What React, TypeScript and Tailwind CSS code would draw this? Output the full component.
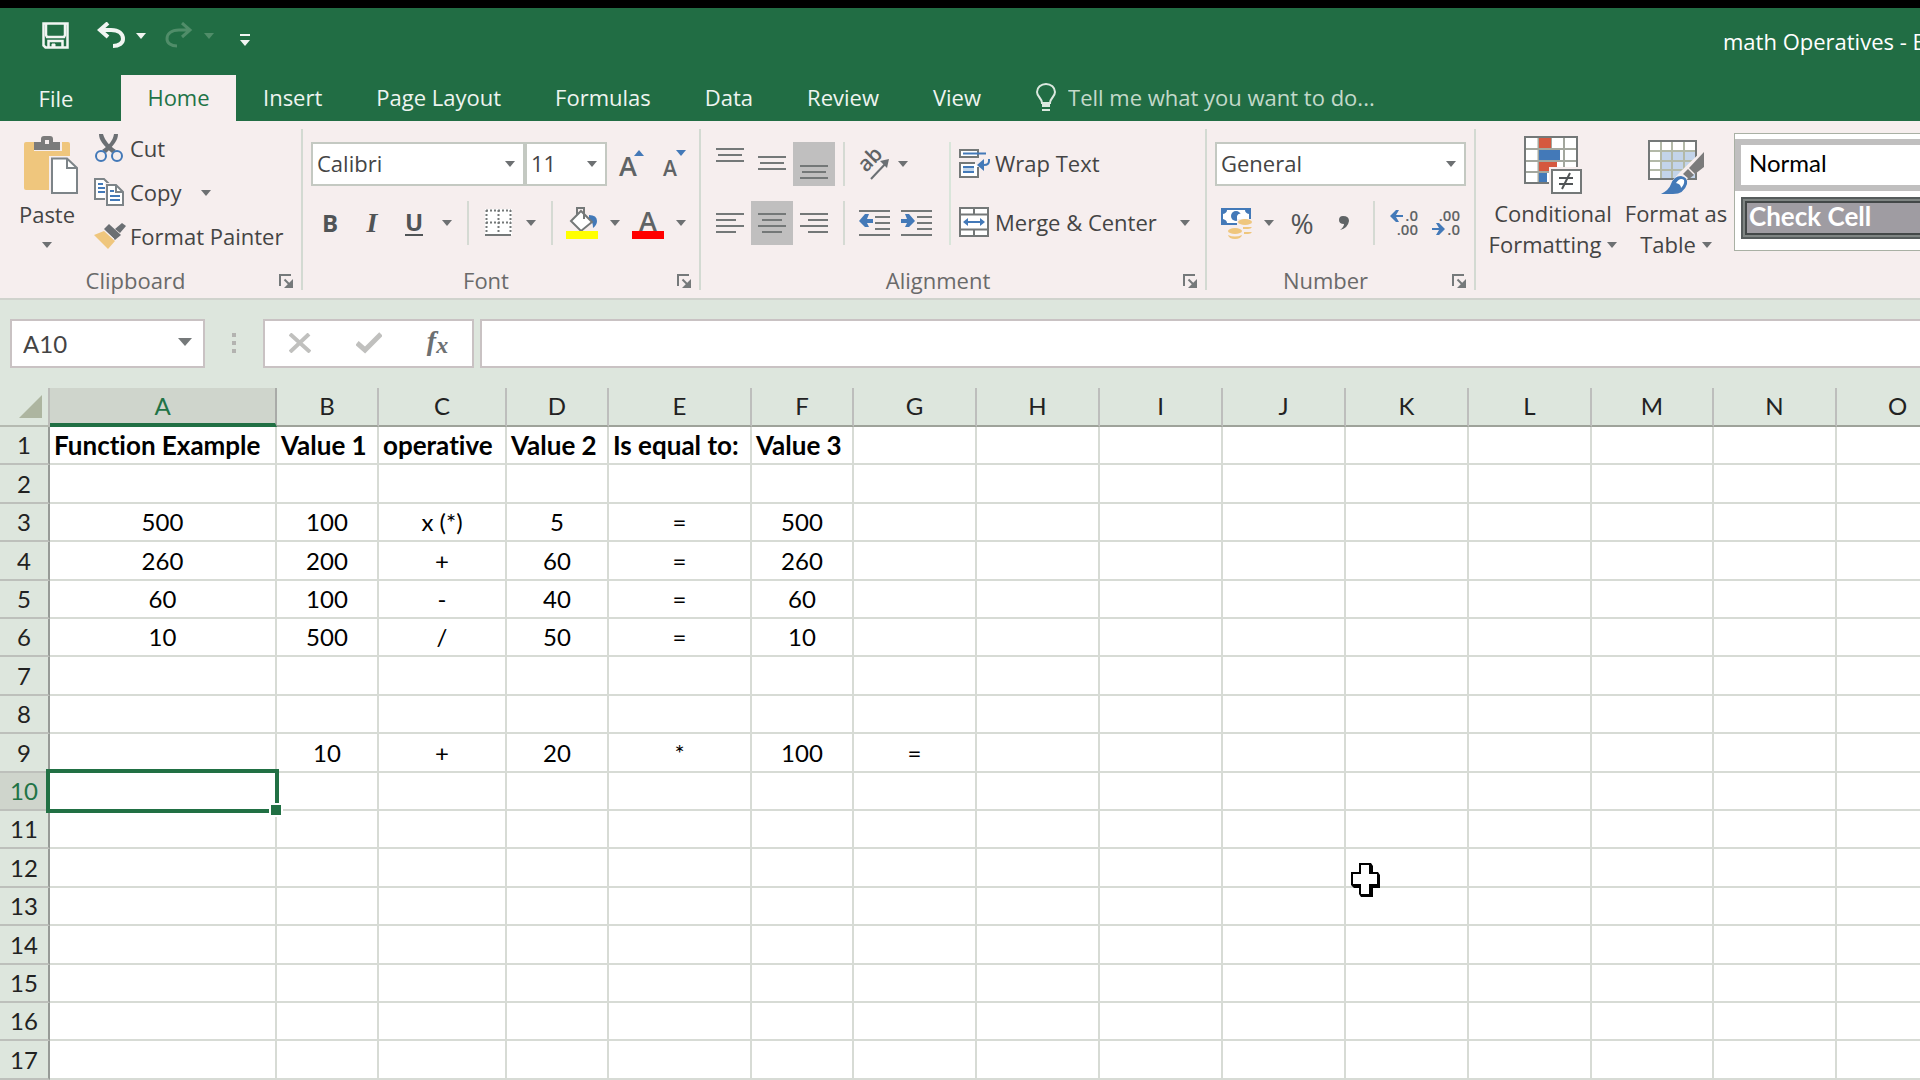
import type { ReactNode } from 'react';
import clsx from 'clsx';

const columns = [
  { id: 'A', width: 'w-[227px]' },
  { id: 'B', width: 'w-[102px]' },
  { id: 'C', width: 'w-[128px]' },
  { id: 'D', width: 'w-[102px]' },
  { id: 'E', width: 'w-[143px]' },
  { id: 'F', width: 'w-[102px]' },
  { id: 'G', width: 'w-[123px]' },
  { id: 'H', width: 'w-[123px]' },
  { id: 'I', width: 'w-[123px]' },
  { id: 'J', width: 'w-[123px]' },
  { id: 'K', width: 'w-[123px]' },
  { id: 'L', width: 'w-[123px]' },
  { id: 'M', width: 'w-[122px]' },
  { id: 'N', width: 'w-[123px]' },
  { id: 'O', width: 'w-[123px]' },
];

// Cell values by row number, starting at column A
const cells: Record<number, string[]> = {
  1: ['Function Example', 'Value 1', 'operative', 'Value 2', 'Is equal to:', 'Value 3'],
  3: ['500', '100', 'x (*)', '5', '=', '500'],
  4: ['260', '200', '+', '60', '=', '260'],
  5: ['60', '100', '-', '40', '=', '60'],
  6: ['10', '500', '/', '50', '=', '10'],
  9: ['', '10', '+', '20', '*', '100', '='],
};

const rowNumbers = Array.from({ length: 17 }, (_, i) => i + 1);
const rowHeights = ['h-[38px]', 'h-[39px]', 'h-[38px]', 'h-[39px]', 'h-[38px]'];
const tabs = ['Insert', 'Page Layout', 'Formulas', 'Data', 'Review', 'View'];

const selectedCol = 'A';
const selectedRow = 10;

function Caret({ className }: { className?: string }) {
  return (
    <svg width="10" height="6" viewBox="0 0 10 6" className={clsx('shrink-0', className ?? 'text-[#6d7072]')} aria-hidden="true">
      <path d="M0 0H10L5 6Z" fill="currentColor" />
    </svg>
  );
}

function CaretButton({ label }: { label: string }) {
  return (
    <button aria-label={label} className="flex h-11 w-6 items-center justify-center">
      <Caret />
    </button>
  );
}

function ToolButton({ label, active, children }: { label: string; active?: boolean; children: ReactNode }) {
  return (
    <button
      aria-label={label}
      aria-pressed={active}
      className={clsx('flex h-11 w-[42px] items-center justify-center', active && 'bg-[#c0bfbf]')}
    >
      {children}
    </button>
  );
}

function Separator() {
  return <div className="mx-2 h-11 w-0.5 bg-[#d5dad3]" />;
}

function GroupDivider() {
  return <div className="my-2 w-0.5 shrink-0 bg-[#d3dad2]" />;
}

function RibbonGroup({ name, width, children }: { name: string; width: string; children: ReactNode }) {
  return (
    <section aria-label={name} className={clsx('flex shrink-0 flex-col', width)}>
      <div className="h-36">{children}</div>
      <div className="flex flex-1 items-center">
        <span className="flex-1 pb-0.5 text-center leading-8 text-[#6a6a6a]">{name}</span>
        <button aria-label={`${name} settings`} className="flex h-8 w-[30px] items-center justify-center">
          <svg width="15" height="14" viewBox="0 0 15 14" aria-hidden="true">
            <path d="M1 12V1H12" fill="none" stroke="#75797a" strokeWidth="2" />
            <path d="M5.500 5.500L11 11" stroke="#75797a" strokeWidth="2" />
            <path d="M14 5V14H5Z" fill="#75797a" />
          </svg>
        </button>
      </div>
    </section>
  );
}

function RibbonSelect({ label, value, width }: { label: string; value: string; width: string }) {
  return (
    <div className={clsx('relative h-11', width)}>
      <select
        aria-label={label}
        defaultValue={value}
        className="h-full w-full appearance-none border-2 border-[#c4c9c2] bg-white pb-0.5 pl-1 text-[#444] outline-none"
      >
        <option>{value}</option>
      </select>
      <span className="pointer-events-none absolute inset-y-0 right-2.5 flex items-center">
        <Caret />
      </span>
    </div>
  );
}

// Horizontal text lines used by the alignment buttons: [x, y, width]
function LinesIcon({ lines }: { lines: [number, number, number][] }) {
  return (
    <svg width="28" height="44" viewBox="0 0 28 44" aria-hidden="true">
      {lines.map(([x, y, w]) => (
        <rect key={y} x={x} y={y} width={w} height="2" fill="#747878" />
      ))}
    </svg>
  );
}

function IndentIcon({ right }: { right?: boolean }) {
  return (
    <svg width="31" height="28" viewBox="0 0 31 28" aria-hidden="true">
      <g fill="#747878">
        <rect y="1" width="31" height="2" />
        <rect x="16" y="7" width="15" height="2" />
        <rect x="16" y="13" width="15" height="2" />
        <rect x="16" y="19" width="15" height="2" />
        <rect y="25" width="31" height="2" />
      </g>
      {right ? (
        <path d="M0 10H6L4 5H8L14 12L8 18H4L6 14H0Z" fill="#4379b8" />
      ) : (
        <path d="M14 10H8L10 5H6L0 12L6 18H10L8 14H14Z" fill="#4379b8" />
      )}
    </svg>
  );
}

function PasteIcon() {
  return (
    <svg width="62" height="58" viewBox="0 0 62 58" aria-hidden="true">
      <path d="M8 8Q8 6 10 6H18V15H46V6H52Q54 6 54 8V20H34V54H10Q8 54 8 52Z" fill="#efc67d" />
      <path d="M18 14V6H25V3Q25 0 28 0H34Q37 0 37 3V6H44V14Z" fill="#7b7b7b" />
      <rect x="29" y="4" width="4" height="4" fill="#f6eeee" />
      <path d="M33 20H53L62 30V58H33Z" fill="#f6eeee" />
      <path d="M36 22.500H51L61 32V57H36Z" fill="#fff" stroke="#7d8488" strokeWidth="2" />
      <path d="M51 22V32H61" fill="none" stroke="#7d8488" strokeWidth="2" />
    </svg>
  );
}

function CutIcon() {
  return (
    <svg width="30" height="30" viewBox="0 0 30 30" aria-hidden="true">
      <path d="M5 1C5 7 9 12 18 20L22 17C16 13 11 8 9 1Z" fill="#6b6f73" />
      <path d="M24 1C24 7 20 12 12 20L8 17C14 13 19 8 20 1Z" fill="#6b6f73" />
      <circle cx="7" cy="23" r="5" fill="none" stroke="#4379b8" strokeWidth="2" />
      <circle cx="23" cy="23" r="5" fill="none" stroke="#4379b8" strokeWidth="2" />
    </svg>
  );
}

function CopyIcon() {
  return (
    <svg width="30" height="28" viewBox="0 0 30 28" aria-hidden="true">
      <path d="M1 1H10L15 6V21H1Z" fill="#fff" stroke="#7d8488" strokeWidth="2" />
      <path d="M4 6H9M4 10H11M4 14H11" stroke="#4379b8" strokeWidth="2" />
      <path d="M11 5H23L30 12V28H11Z" fill="#f6eeee" />
      <path d="M13 7H22L29 14V27H13Z" fill="#fff" stroke="#7d8488" strokeWidth="2" />
      <path d="M22 7V14H29" fill="none" stroke="#7d8488" strokeWidth="2" />
      <path d="M16 13H20M16 18H26M16 22H26" stroke="#4379b8" strokeWidth="2" />
    </svg>
  );
}

function PainterIcon() {
  return (
    <svg width="32" height="28" viewBox="0 0 32 28" aria-hidden="true">
      <path d="M0 13L10 9L21 19L14 27Z" fill="#efc67d" />
      <path d="M10 7L15 2L27 13L21 18Z" fill="#6b6f73" />
      <path d="M21 7L28 1L32 4L26 11Z" fill="#6b6f73" />
      <path d="M12 10L20 17" stroke="#f6eeee" strokeWidth="1" />
    </svg>
  );
}

function BordersIcon() {
  return (
    <svg width="27" height="28" viewBox="0 0 27 28" aria-hidden="true">
      <rect width="27" height="26" fill="#fff" />
      <path d="M1 1.500H26M1 13.500H26M1.500 1V25M13.500 1V25M25.500 1V25" stroke="#747878" strokeWidth="2" strokeDasharray="2 2" fill="none" />
      <rect y="25" width="26" height="2" fill="#747878" />
    </svg>
  );
}

function FillIcon() {
  return (
    <svg width="32" height="34" viewBox="0 0 32 34" aria-hidden="true">
      <path d="M23 9Q31 9 31 15Q31 19 27 22Q27 15 23 13Z" fill="#4379b8" />
      <path d="M15 5L26 16L15 25L5 15Z" fill="#fff" stroke="#747878" strokeWidth="2" />
      <path d="M11 9V2H18V13" fill="none" stroke="#747878" strokeWidth="2" />
      <rect y="25" width="32" height="8" fill="#ff0" />
    </svg>
  );
}

function FontColorIcon() {
  return (
    <svg width="32" height="34" viewBox="0 0 32 34" className="overflow-visible" aria-hidden="true">
      <text x="16" y="25" textAnchor="middle" fontSize="27" fontWeight="600" fill="#5f6365" className="font-['Open_Sans',sans-serif]">A</text>
      <rect y="25" width="32" height="8" fill="#f00" />
    </svg>
  );
}

function FontSizeIcon({ grow }: { grow?: boolean }) {
  return (
    <svg width="28" height="44" viewBox="0 0 28 44" className="overflow-visible" aria-hidden="true">
      <text x="10" y="34" textAnchor="middle" fontSize={grow ? 27 : 21} fontWeight="600" fill="#5f6365" className="font-['Open_Sans',sans-serif]">A</text>
      <path d={grow ? 'M16 14L21 8L26 14Z' : 'M16 8L21 14L26 8Z'} fill="#4379b8" />
    </svg>
  );
}

function OrientationIcon() {
  return (
    <svg width="34" height="32" viewBox="0 0 34 32" className="overflow-visible" aria-hidden="true">
      <text x="9" y="25" transform="rotate(-45 9 25)" fontSize="21" fontWeight="600" fill="#5f6365" className="font-['Open_Sans',sans-serif]">ab</text>
      <path d="M14 31L30 14" stroke="#6b6f73" strokeWidth="2" />
      <path d="M32 11L23 13L30 20Z" fill="#6b6f73" />
    </svg>
  );
}

function WrapIcon() {
  return (
    <svg width="32" height="30" viewBox="0 0 32 30" aria-hidden="true">
      <rect x="1" y="2" width="18" height="7" fill="#fff" stroke="#747878" strokeWidth="2" />
      <path d="M4 5.500H27" stroke="#4379b8" strokeWidth="2" />
      <path d="M19 19V29H1V15H16" fill="#fff" stroke="#747878" strokeWidth="2" />
      <rect x="4" y="19" width="11" height="6" fill="#c5d8ec" />
      <path d="M4 19H15M4 24H15" stroke="#4379b8" strokeWidth="2" />
      <path d="M30 11V13Q30 17 25 17H22" fill="none" stroke="#4379b8" strokeWidth="2" />
      <path d="M18 17L25 11V23Z" fill="#4379b8" />
    </svg>
  );
}

function MergeIcon() {
  return (
    <svg width="30" height="30" viewBox="0 0 30 30" aria-hidden="true">
      <rect x="1" y="1" width="28" height="28" fill="#fff" stroke="#747878" strokeWidth="2" />
      <path d="M1 7.500H29M1 22.500H29M15 1V7M15 23V29" stroke="#747878" strokeWidth="2" />
      <path d="M7 15H23" stroke="#4379b8" strokeWidth="2" />
      <path d="M4 15L9 11V19ZM26 15L21 11V19Z" fill="#4379b8" />
    </svg>
  );
}

function CurrencyIcon() {
  return (
    <svg width="32" height="32" viewBox="0 0 32 32" aria-hidden="true">
      <rect x="1" y="1" width="30" height="17" fill="#4379b8" />
      <path d="M7 3H25Q25 6 29 7V12Q25 13 25 16H7Q7 13 3 12V7Q7 6 7 3Z" fill="#fff" />
      <circle cx="16" cy="9" r="5" fill="#4379b8" />
      <path d="M17 9Q19 5 22 8L21 12H17Z" fill="#fff" />
      <path d="M17 12H32V32H8V21H17Z" fill="#f6eeee" />
      <g fill="#efc67d">
        <ellipse cx="25" cy="15" rx="7" ry="3" />
        <path d="M23 20H32Q31 22 28 22H23ZM24 25H32Q31 27 28 27H24Z" />
        <ellipse cx="15" cy="24" rx="7" ry="3" />
        <path d="M8 28Q15 31 22 28Q21 32 15 32Q9 32 8 28Z" />
      </g>
    </svg>
  );
}

function DecimalIcon({ increase }: { increase?: boolean }) {
  return (
    <svg width="30" height="32" viewBox="0 0 30 32" aria-hidden="true">
      <g fontSize="15" fontWeight="600" fill="#5f6365" className="font-['Open_Sans',sans-serif]" textAnchor="end">
        <text x="29" y="14">{increase ? '.0' : '.00'}</text>
        <text x="29" y="28">{increase ? '.00' : '.0'}</text>
      </g>
      {increase ? (
        <path d="M1 9L7 3H10L7 8H14V10H7L10 15H7Z" fill="#4379b8" />
      ) : (
        <path d="M14 22L8 16H5L8 21H1V23H8L5 28H8Z" fill="#4379b8" />
      )}
    </svg>
  );
}

function ConditionalIcon() {
  return (
    <svg width="58" height="58" viewBox="0 0 58 58" aria-hidden="true">
      <rect x="1" y="1" width="52" height="46" fill="#fff" />
      <path d="M1 13H53M1 25H53M1 36H53M14.500 1V47M27 1V47M40 1V47" stroke="#a3a79e" strokeWidth="2" />
      <rect x="1" y="1" width="52" height="46" fill="none" stroke="#747878" strokeWidth="2" />
      <rect x="15" y="2" width="12" height="10" fill="#d5583f" />
      <rect x="15" y="14" width="21" height="10" fill="#4379b8" />
      <rect x="15" y="26" width="18" height="9" fill="#d5583f" />
      <rect x="15" y="37" width="8" height="9" fill="#4379b8" />
      <rect x="25" y="31" width="33" height="27" fill="#f6eeee" />
      <rect x="28" y="34" width="29" height="23" fill="#fff" stroke="#747878" strokeWidth="2" />
      <path d="M35 42H49M35 48H49M46 37L38 53" stroke="#505456" strokeWidth="2" />
    </svg>
  );
}

function FormatTableIcon() {
  return (
    <svg width="58" height="58" viewBox="0 0 58 58" aria-hidden="true">
      <rect x="2" y="5" width="47" height="38" fill="#fff" />
      <rect x="14" y="15" width="35" height="28" fill="#c3d4ea" />
      <path d="M2 15H49M2 25H49M2 34H49M14 5V43M25 5V43M37 5V43" stroke="#b3b9a8" strokeWidth="2" />
      <rect x="2" y="5" width="47" height="38" fill="none" stroke="#747878" strokeWidth="2" />
      <path d="M58 12L33 36L24 46L14 58H36Q44 50 40 43L58 30Z" fill="#f6eeee" />
      <path d="M57 16V31L48 38L42 32Z" fill="#7b7b7b" />
      <path d="M41 33L47 39L42 43L36 38Z" fill="#7b7b7b" />
      <path d="M14 58Q22 54 24 48Q27 40 34 40Q41 41 40 48Q37 58 26 58Z" fill="#4379b8" />
      <path d="M29 47Q33 41 37 44Q38 48 34 52Q34 48 29 47Z" fill="#fff" />
    </svg>
  );
}

function TitleBar() {
  return (
    <header className="flex h-[67px] items-center pl-[42px] text-white">
      <div className="flex items-center pb-3">
        <button aria-label="Save">
          <svg width="27" height="27" viewBox="0 0 27 27" fill="none" stroke="#f1f5f2" strokeWidth="2.500" aria-hidden="true">
            <path d="M1.500 1.500H25.500V25.500H3.500L1.500 23.500Z" />
            <path d="M4 2V13L5 15H22L23 13V2" />
            <path d="M6.500 26V19H20.500V26" />
            <path d="M10 26V22H13V26" fill="#f1f5f2" strokeWidth="1" />
          </svg>
        </button>
        <button aria-label="Undo" className="ml-7">
          <svg width="28" height="27" viewBox="0 0 28 27" fill="none" stroke="#f1f5f2" strokeWidth="4" aria-hidden="true">
            <path d="M11 1L3 8L11 15M3 8H14C22 8 26 12 26 17C26 21 22 24 16 24" />
          </svg>
        </button>
        <button aria-label="Undo history" className="ml-[11px] flex h-7 items-center">
          <Caret className="text-[#f1f5f2]" />
        </button>
        <button aria-label="Redo" disabled className="ml-[19px]">
          <svg width="28" height="27" viewBox="0 0 28 27" fill="none" stroke="#508d69" strokeWidth="3" aria-hidden="true">
            <path d="M17 1L25 8L17 15M25 8H14C6 8 2 12 2 17C2 21 6 24 12 24" />
          </svg>
        </button>
        <button aria-label="Redo history" disabled className="ml-[11px] flex h-7 items-center">
          <Caret className="text-[#508d69]" />
        </button>
        <button aria-label="Customize Quick Access Toolbar" className="mt-2 ml-[26px]">
          <svg width="10" height="12" viewBox="0 0 10 12" fill="#f1f5f2" aria-hidden="true">
            <path d="M0 0H10V2H0ZM0 6H10L5 12Z" />
          </svg>
        </button>
      </div>
      <h1 className="ml-auto w-[197px] overflow-hidden whitespace-nowrap">math Operatives - Excel</h1>
    </header>
  );
}

function TabStrip() {
  return (
    <nav className="flex h-[46px] items-center text-[#eef4f0]">
      <button className="h-full w-[121px] pr-[9px]">File</button>
      <button aria-current="page" className="h-full w-[115px] bg-[#f6eeee] pb-0.5 text-[#217346]">Home</button>
      {tabs.map((tab) => (
        <button key={tab} className="h-full px-[27px] pb-0.5">{tab}</button>
      ))}
      <label className="ml-7 flex flex-1 items-center gap-3 pb-0.5">
        <svg width="20" height="28" viewBox="0 0 20 28" fill="none" stroke="#dbe8df" strokeWidth="2" aria-hidden="true">
          <path d="M6 20C6 15 1 14 1 9A9 8 0 0 1 19 9C19 14 14 15 14 20Z" />
          <path d="M6 21H14M6 23H14M6 27H14" />
        </svg>
        <input
          aria-label="Tell me what you want to do"
          placeholder="Tell me what you want to do..."
          className="flex-1 bg-transparent outline-none placeholder:text-[#c3d9ca]"
        />
      </label>
    </nav>
  );
}

function ClipboardGroup() {
  return (
    <RibbonGroup name="Clipboard" width="w-[301px]">
      <div className="flex">
        <button className="flex w-[94px] flex-col items-center pt-[15px]">
          <PasteIcon />
          <span className="mt-1 leading-8">Paste</span>
          <span className="mt-3"><Caret /></span>
        </button>
        <div className="flex flex-col items-start pt-1.5 whitespace-nowrap">
          <button className="flex h-11 items-center gap-1.5 pb-0.5"><CutIcon />Cut</button>
          <div className="flex items-center gap-3">
            <button className="flex h-11 items-center gap-1.5 pb-0.5"><CopyIcon />Copy</button>
            <CaretButton label="Copy options" />
          </div>
          <button className="flex h-11 items-center gap-1 pb-0.5"><PainterIcon />Format Painter</button>
        </div>
      </div>
    </RibbonGroup>
  );
}

function FontGroup() {
  return (
    <RibbonGroup name="Font" width="w-[396px]">
      <div className="flex flex-col gap-[15px] pt-[21px]">
        <div className="flex pl-2">
          <RibbonSelect label="Font name" value="Calibri" width="w-[214px]" />
          <RibbonSelect label="Font size" value="11" width="w-[82px]" />
          <div className="flex pl-1">
            <ToolButton label="Increase font size"><FontSizeIcon grow /></ToolButton>
            <ToolButton label="Decrease font size"><FontSizeIcon /></ToolButton>
          </div>
        </div>
        <div className="flex items-center pl-1.5 text-2xl text-[#505456]">
          <ToolButton label="Bold"><b>B</b></ToolButton>
          <ToolButton label="Italic"><i className="font-['Liberation_Serif',serif] text-[28px] font-bold">I</i></ToolButton>
          <ToolButton label="Underline"><span className="border-b-2 leading-6 font-bold">U</span></ToolButton>
          <CaretButton label="Underline style" />
          <Separator />
          <ToolButton label="Borders"><BordersIcon /></ToolButton>
          <CaretButton label="Border style" />
          <Separator />
          <ToolButton label="Fill color"><FillIcon /></ToolButton>
          <CaretButton label="Fill color options" />
          <ToolButton label="Font color"><FontColorIcon /></ToolButton>
          <CaretButton label="Font color options" />
        </div>
      </div>
    </RibbonGroup>
  );
}

function AlignmentGroup() {
  return (
    <RibbonGroup name="Alignment" width="w-[504px]">
      <div className="flex pt-[21px] pl-2">
        <div className="flex flex-col gap-[15px]">
          <div className="flex">
            <ToolButton label="Top align"><LinesIcon lines={[[0, 6, 28], [2, 12, 24], [0, 18, 28]]} /></ToolButton>
            <ToolButton label="Middle align"><LinesIcon lines={[[0, 14, 28], [2, 20, 24], [0, 26, 28]]} /></ToolButton>
            <ToolButton label="Bottom align" active><LinesIcon lines={[[0, 23, 28], [2, 29, 24], [0, 35, 28]]} /></ToolButton>
            <Separator />
            <ToolButton label="Orientation"><OrientationIcon /></ToolButton>
            <div className="-ml-1"><CaretButton label="Orientation options" /></div>
          </div>
          <div className="flex">
            <ToolButton label="Align left"><LinesIcon lines={[[0, 12, 28], [0, 18, 20], [0, 24, 28], [0, 30, 20]]} /></ToolButton>
            <ToolButton label="Center" active><LinesIcon lines={[[0, 12, 28], [4, 18, 20], [0, 24, 28], [4, 30, 20]]} /></ToolButton>
            <ToolButton label="Align right"><LinesIcon lines={[[0, 12, 28], [8, 18, 20], [0, 24, 28], [8, 30, 20]]} /></ToolButton>
            <Separator />
            <ToolButton label="Decrease indent"><IndentIcon /></ToolButton>
            <ToolButton label="Increase indent"><IndentIcon right /></ToolButton>
          </div>
        </div>
        <div className="mr-2 ml-3 w-0.5 bg-[#d9e5da]" />
        <div className="flex flex-col gap-[15px] whitespace-nowrap">
          <button className="flex h-11 items-center gap-1 pb-0.5"><WrapIcon />Wrap Text</button>
          <div className="flex items-center gap-4">
            <button className="flex h-11 items-center gap-1.5 pb-0.5"><MergeIcon />Merge &amp; Center</button>
            <CaretButton label="Merge options" />
          </div>
        </div>
      </div>
    </RibbonGroup>
  );
}

function NumberGroup() {
  return (
    <RibbonGroup name="Number" width="w-[267px]">
      <div className="flex flex-col gap-[15px] pt-[21px] pl-2">
        <RibbonSelect label="Number format" value="General" width="w-[251px]" />
        <div className="flex text-[#505456]">
          <ToolButton label="Accounting number format"><CurrencyIcon /></ToolButton>
          <CaretButton label="Currency options" />
          <ToolButton label="Percent style"><span className="text-[28px]">%</span></ToolButton>
          <ToolButton label="Comma style">
            <svg width="12" height="16" viewBox="0 0 12 16" aria-hidden="true">
              <path d="M5 1Q11 1 11 6Q10 13 2 15Q6 12 6 9Q1 9 1 5Q1 1 5 1Z" fill="#5f6365" />
            </svg>
          </ToolButton>
          <Separator />
          <ToolButton label="Increase decimal"><DecimalIcon increase /></ToolButton>
          <ToolButton label="Decrease decimal"><DecimalIcon /></ToolButton>
        </div>
      </div>
    </RibbonGroup>
  );
}

function StylesGroup() {
  return (
    <section aria-label="Styles" className="flex min-w-0 flex-1 items-start pl-3">
      <button className="flex w-[130px] shrink-0 flex-col items-center pt-[15px] leading-[31px]">
        <ConditionalIcon />
        <span className="mt-1">Conditional</span>
        <span className="flex items-center gap-1.5">Formatting <Caret /></span>
      </button>
      <button className="ml-1.5 flex w-[104px] shrink-0 flex-col items-center pt-[15px] leading-[31px] whitespace-nowrap">
        <FormatTableIcon />
        <span className="mt-1">Format as</span>
        <span className="flex items-center gap-1.5">Table <Caret /></span>
      </button>
      <div className="mt-3 ml-1.5 flex h-[118px] min-w-0 flex-1 flex-col border border-r-0 border-[#a9b0a4] bg-white pt-[5px] font-[Lato,sans-serif]">
        <button className="h-[52px] border-[6px] border-r-0 border-[#c0bfbf] pb-1 pl-2 text-left text-2xl leading-8 text-black">
          Normal
        </button>
        <button className="mt-1.5 ml-1.5 h-[42px] border-2 border-r-0 border-[#565c5c] bg-[#7f8583] py-0.5 pl-0.5">
          <span className="flex h-full items-center border-2 border-r-0 border-[#434848] bg-[#9f9ca2] pb-1 pl-0.5 text-[26px] leading-none font-bold text-white">
            Check Cell
          </span>
        </button>
      </div>
    </section>
  );
}

function FormulaBar() {
  return (
    <div className="flex h-[88px] items-center bg-[#dde6dd] pb-0.5 pl-2.5">
      <div className="relative h-[49px] w-[195px]">
        <input
          aria-label="Name box"
          defaultValue="A10"
          className="h-full w-full border-2 border-[#c9c2c3] bg-white pl-[11px] font-[Lato,sans-serif] text-2xl text-[#444] outline-none"
        />
        <button aria-label="Name box list" className="absolute top-[19px] right-[13px]">
          <svg width="14" height="8" viewBox="0 0 14 8" aria-hidden="true">
            <path d="M0 0H14L7 8Z" fill="#75797a" />
          </svg>
        </button>
      </div>
      <div className="flex w-[58px] flex-col items-center gap-1">
        <span className="size-1 bg-[#b3b3b0]" />
        <span className="size-1 bg-[#b3b3b0]" />
        <span className="size-1 bg-[#b3b3b0]" />
      </div>
      <div className="grid h-[49px] w-[211px] grid-cols-3 border-2 border-[#c9c2c3] bg-white">
        <button aria-label="Cancel" className="flex items-center justify-center">
          <svg width="22" height="20" viewBox="0 0 22 20" aria-hidden="true">
            <path d="M1 1L21 19M20 1L1 19" stroke="#c0c0be" strokeWidth="4" />
          </svg>
        </button>
        <button aria-label="Enter" className="flex items-center justify-center">
          <svg width="26" height="22" viewBox="0 0 26 22" aria-hidden="true">
            <path d="M1 11L9 18L25 2" fill="none" stroke="#c0c0be" strokeWidth="5" />
          </svg>
        </button>
        <button aria-label="Insert function" className="flex items-center justify-center pb-1 font-['Liberation_Serif',serif] text-[#6d7072] italic">
          <b className="text-[28px] leading-none">f</b>
          <b className="pt-2 text-2xl leading-none">x</b>
        </button>
      </div>
      <input aria-label="Formula" className="ml-1.5 h-[49px] flex-1 border-2 border-r-0 border-[#c9c2c3] bg-white px-2 outline-none" />
    </div>
  );
}

function Sheet() {
  return (
    <div className="relative overflow-hidden">
      <table className="w-0 table-fixed border-separate border-spacing-0 font-[Lato,sans-serif] text-2xl leading-none text-black [font-variant-ligatures:none]">
        <thead>
          <tr className="h-[39px]">
            <td className="w-[50px] border-r-2 border-b-2 border-r-[#bcbcb9] border-b-[#b5bab1] bg-[#dde6dd] p-0">
              <svg width="23" height="23" viewBox="0 0 23 23" className="ml-[19px]" aria-hidden="true">
                <path d="M23 0V23H0Z" fill="#adb5a0" />
              </svg>
            </td>
            {columns.map(({ id, width }) => (
              <th
                key={id}
                scope="col"
                className={clsx(
                  'border-r-2 p-0 font-normal',
                  width,
                  id === selectedCol
                    ? 'border-b-4 border-r-[#a9aba8] border-b-[#217044] bg-[#cfd5cc] text-[#217346]'
                    : 'border-b-2 border-r-[#bdbebc] border-b-[#9ea39a] bg-[#dde6dd] pb-0.5 text-[#222]'
                )}
              >
                {id}
              </th>
            ))}
          </tr>
        </thead>
        <tbody>
          {rowNumbers.map((n, i) => (
            <tr key={n} className={rowHeights[i % 5]}>
              <th
                scope="row"
                className={clsx(
                  'border-r-2 border-b-2 border-r-[#979b97] border-b-[#bdc0bb] p-0 font-normal',
                  n === selectedRow ? 'bg-[#cfd5cc] text-[#217346]' : 'bg-[#dde6dd] text-[#222]'
                )}
              >
                {n}
              </th>
              {columns.map(({ id }, c) => (
                <td
                  key={id}
                  className={clsx(
                    'border-r-2 border-b-2 border-[#d7dbd5] py-0 whitespace-nowrap',
                    n === 1 ? 'pr-0 pl-1 text-left text-[26px] font-bold' : 'px-0 text-center',
                    n === selectedRow && id === selectedCol && 'relative'
                  )}
                >
                  {cells[n]?.[c]}
                  {n === selectedRow && id === selectedCol && (
                    <div className="absolute -inset-1 border-4 border-[#217044]">
                      <span className="absolute -right-2 -bottom-2 box-content size-2.5 border-2 border-white bg-[#217044]" />
                    </div>
                  )}
                </td>
              ))}
            </tr>
          ))}
        </tbody>
      </table>
      {/* Cell-select mouse pointer */}
      <svg width="30" height="36" viewBox="0 0 30 36" className="absolute top-[474px] left-[1351px]" aria-hidden="true">
        <path d="M8 1H20L22 4V10H27L29 13V26H22V35H10L8 32V26H3L0 23V10H8Z" fill="#000" />
        <path d="M10 3H18V12H26V22H18V32H10V22H2V12H10Z" fill="#fff" />
      </svg>
    </div>
  );
}

export default function App() {
  return (
    <div className="min-h-screen overflow-hidden bg-white font-['Open_Sans',sans-serif] text-[22px] text-[#444]">
      <div className="border-t-8 border-black bg-[#216d44]">
        <TitleBar />
        <TabStrip />
      </div>
      <div className="flex h-[179px] overflow-hidden border-b-2 border-[#d0d3cd] bg-[#f6eeee]">
        <ClipboardGroup />
        <GroupDivider />
        <FontGroup />
        <GroupDivider />
        <AlignmentGroup />
        <GroupDivider />
        <NumberGroup />
        <GroupDivider />
        <StylesGroup />
      </div>
      <FormulaBar />
      <Sheet />
    </div>
  );
}
